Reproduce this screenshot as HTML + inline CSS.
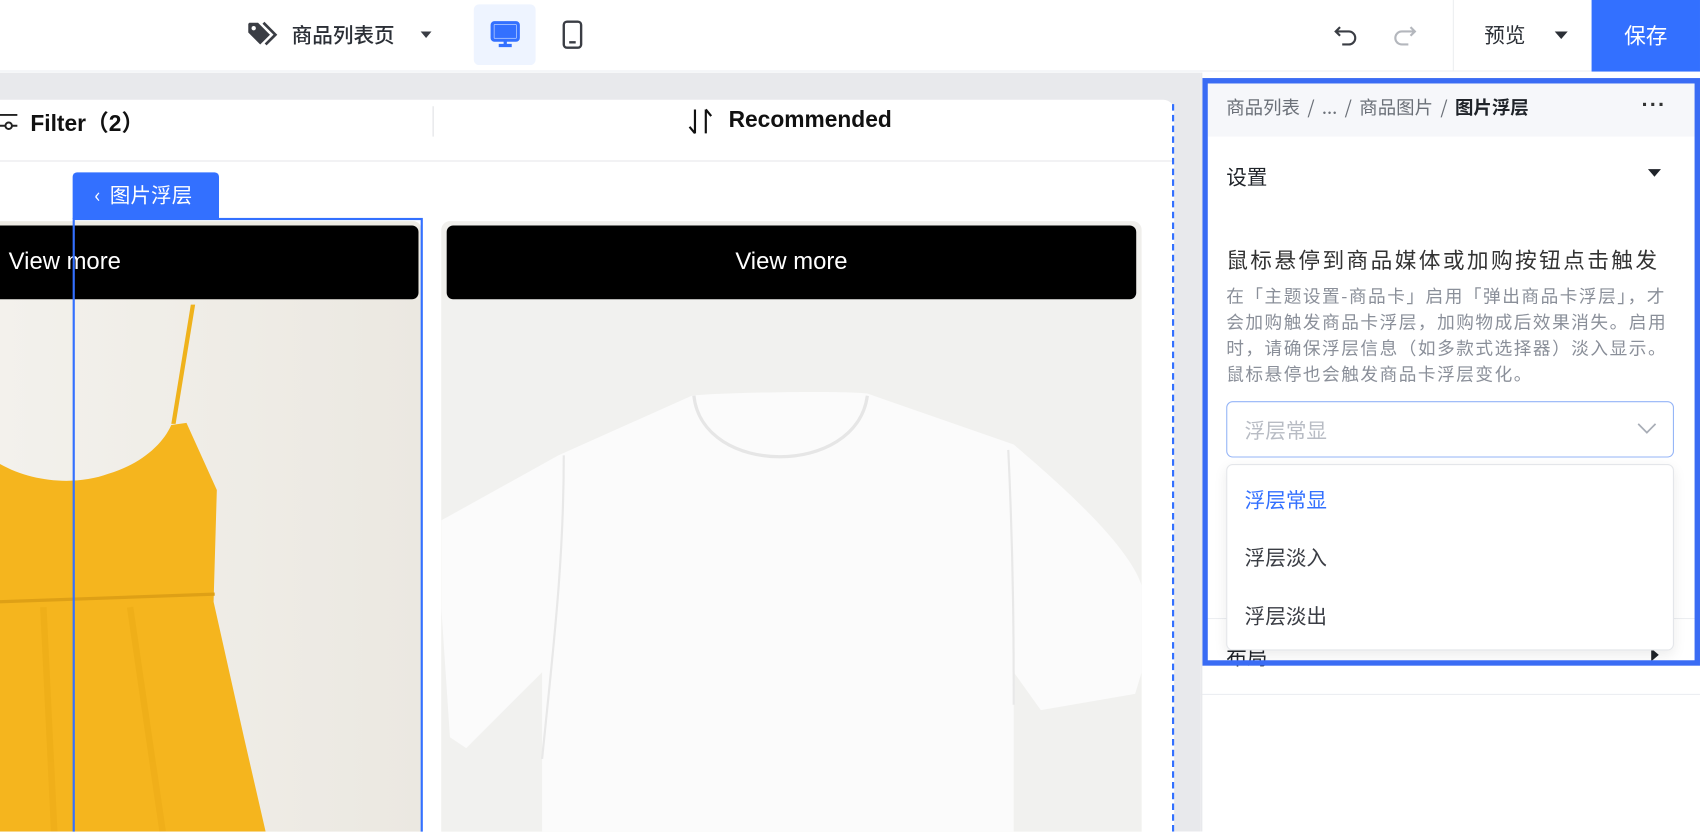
<!DOCTYPE html>
<html><head><meta charset="utf-8"><style>
*{margin:0;padding:0;box-sizing:border-box}
html,body{width:1700px;height:832px;overflow:hidden;background:#fff}
#w{position:absolute;left:0;top:0;width:1568px;height:767px;transform:scale(1.08418);transform-origin:0 0;font-family:"Liberation Sans","Noto Sans CJK SC",sans-serif;overflow:hidden}
.a{position:absolute}
.cn{font-family:"Noto Sans CJK SC","Liberation Sans",sans-serif}
</style></head><body><div id="w">
<!-- top bar -->
<div class="a" style="left:0;top:0;width:1568px;height:66px;background:#fff;border-bottom:1px solid #eceef1"></div>
<svg class="a" style="left:228px;top:19px" width="30" height="26" viewBox="0 0 30 26"><path d="M1 3v8l11 11 9-9L10 2H2z" fill="#3a3d44"/><circle cx="6" cy="7" r="2" fill="#fff"/><path d="M15 2l11 11-9 9" fill="none" stroke="#3a3d44" stroke-width="2.5"/></svg>
<div class="a cn" style="left:269px;top:18px;font-size:19px;font-weight:500;color:#2b2f36">商品列表页</div>
<div class="a" style="left:388px;top:29px;border:5px solid transparent;border-top:6px solid #3a3d44"></div>
<div class="a" style="left:437px;top:4px;width:57px;height:56px;background:#eef4ff;border-radius:5px"></div>
<svg class="a" style="left:452px;top:19px" width="28" height="26" viewBox="0 0 28 26"><rect x="2" y="2" width="24" height="16" rx="2" fill="none" stroke="#3370ff" stroke-width="3"/><rect x="4" y="4" width="20" height="12" fill="#3370ff"/><path d="M14 18v4M8 23h12" stroke="#3370ff" stroke-width="3"/></svg>
<svg class="a" style="left:517px;top:18px" width="22" height="28" viewBox="0 0 22 28"><rect x="3" y="2" width="16" height="24" rx="3" fill="none" stroke="#3a3d44" stroke-width="2.2"/><path d="M8 21h6" stroke="#3a3d44" stroke-width="2.2"/></svg>
<svg class="a" style="left:1230px;top:21px" width="24" height="22" viewBox="0 0 24 22"><path d="M6 4L2 8l4 4M2 8h12a6 6 0 010 12H8" fill="none" stroke="#3a3d44" stroke-width="2"/></svg>
<svg class="a" style="left:1283px;top:21px" width="24" height="22" viewBox="0 0 24 22"><path d="M18 4l4 4-4 4M22 8H10a6 6 0 000 12h6" fill="none" stroke="#b4b7bd" stroke-width="2"/></svg>
<div class="a" style="left:1340px;top:0;width:1px;height:66px;background:#eceef1"></div>
<div class="a cn" style="left:1369px;top:18px;font-size:19px;color:#2b2f36">预览</div>
<div class="a" style="left:1434px;top:29px;border:6px solid transparent;border-top:7px solid #2b2f36"></div>
<div class="a cn" style="left:1468px;top:0;width:100px;height:66px;background:#3370ff;color:#fff;font-size:20px;text-align:center;line-height:64px">保存</div>
<!-- canvas -->
<div class="a" style="left:0;top:67px;width:1107px;height:700px;background:#e8e9ec"></div>
<div class="a" style="left:0;top:92px;width:1083px;height:680px;background:#fff;border-top-right-radius:10px"></div>
<div class="a" style="left:1081px;top:96px;height:671px;border-left:2px dashed #3370ff"></div>
<div class="a" style="left:0;top:148px;width:1081px;height:1px;background:#e6e7ea"></div>
<div class="a" style="left:399px;top:98px;width:1px;height:28px;background:#e0e1e4"></div>
<svg class="a" style="left:0;top:101px" width="18" height="20" viewBox="0 0 18 20"><path d="M0 5h16M0 15h16" stroke="#222" stroke-width="1.8"/><circle cx="8" cy="15" r="3" fill="#fff" stroke="#222" stroke-width="1.8"/></svg>
<div class="a" style="left:28px;top:98px;font-size:21px;font-weight:bold;color:#111">Filter（2）</div>
<svg class="a" style="left:633px;top:99px" width="26" height="26" viewBox="0 0 26 26"><path d="M8 2v22M3 18l5 6M18 24V2M23 8l-5-6" fill="none" stroke="#111" stroke-width="2"/></svg>
<div class="a" style="left:672px;top:99px;font-size:21px;font-weight:bold;color:#111">Recommended</div>
<!-- card 1 -->
<div class="a" style="left:0;top:204px;width:389px;height:570px;background:#eeebe4;border-radius:0 8px 0 0"></div>
<svg class="a" style="left:0;top:276px" width="389" height="491" viewBox="0 276 389 491">
<defs><linearGradient id="bg1" x1="0" x2="1"><stop offset="0" stop-color="#f3f1ec"/><stop offset="1" stop-color="#ebe8e1"/></linearGradient></defs>
<rect x="0" y="276" width="389" height="491" fill="url(#bg1)"/>
<path d="M180 281l-4 0-18 110 4 0z" fill="#efb21c"/>
<path d="M0 428 C30 445 70 448 100 437 C130 428 150 410 158 392 L172 390 L200 452 L197 555 L225 680 L245 767 L0 767Z" fill="#f5b51e"/>
<path d="M0 555 L198 548" stroke="#dea016" stroke-width="3"/>
<path d="M120 560 L150 767 M40 560 L50 767" stroke="#e8a814" stroke-width="6" opacity=".4"/>
</svg>
<div class="a" style="left:0;top:208px;width:386px;height:68px;background:#000;border-radius:0 6px 6px 0"></div>
<div class="a" style="left:8px;top:228px;font-size:22px;color:#fff">View more</div>
<!-- card 2 -->
<div class="a" style="left:407px;top:204px;width:646px;height:570px;background:#f0efec;border-radius:8px 8px 0 0"></div>
<svg class="a" style="left:407px;top:276px" width="646" height="491" viewBox="407 276 646 491">
<rect x="407" y="276" width="646" height="491" fill="#f1f1ef"/>
<path d="M638 365 C660 362 780 360 800 363 L935 410 C970 440 1040 500 1053 540 L1053 620 L1047 640 L960 655 L935 620 L935 767 L500 767 L500 620 L430 690 L415 680 L407 560 L407 480 L515 420Z" fill="#fbfbfb"/>
<path d="M640 365 C648 440 790 440 800 365" fill="none" stroke="#e6e6e6" stroke-width="3"/>
<path d="M520 420 C520 520 510 600 500 700 M930 415 C935 520 935 600 935 650" fill="none" stroke="#e8e8e8" stroke-width="2"/>
</svg>
<div class="a" style="left:412px;top:208px;width:636px;height:68px;background:#000;border-radius:6px"></div>
<div class="a" style="left:412px;top:228px;width:636px;text-align:center;font-size:22px;color:#fff">View more</div>
<!-- selection -->
<div class="a" style="left:67px;top:201px;width:323px;height:580px;border:2px solid #3370ff"></div>
<div class="a cn" style="left:67px;top:159px;width:135px;height:43px;background:#3370ff;border-radius:4px 4px 0 0;color:#fff;font-size:19px;line-height:42px;padding-left:20px">‹&nbsp;&nbsp;图片浮层</div>
<!-- right panel -->
<div class="a" style="left:1107px;top:67px;width:461px;height:700px;background:#fff"></div>
<div class="a" style="left:1114px;top:77px;width:450px;height:49px;background:#f6f7fa"></div>
<div class="a cn" style="left:1131px;top:85px;font-size:17px;color:#6b7078;word-spacing:3px">商品列表 / ... / 商品图片 / <b style="color:#1f2329;font-weight:600">图片浮层</b></div>
<div class="a" style="left:1514px;top:86px;font-size:20px;color:#333;letter-spacing:1px;font-weight:bold">···</div>
<div class="a cn" style="left:1131px;top:149px;font-size:19px;color:#1f2329">设置</div>
<div class="a" style="left:1520px;top:156px;border:6px solid transparent;border-top:7px solid #1f2329"></div>
<div class="a cn" style="left:1131px;top:224px;width:410px;overflow:hidden;white-space:nowrap;font-size:20px;letter-spacing:2.2px;color:#333">鼠标悬停到商品媒体或加购按钮点击触发</div>
<div class="a cn" style="left:1131px;top:260px;white-space:nowrap;font-size:16.3px;letter-spacing:1.4px;line-height:24px;color:#8a8f99">在「主题设置-商品卡」启用「弹出商品卡浮层」，才<br>会加购触发商品卡浮层，加购物成后效果消失。启用<br>时，请确保浮层信息（如多款式选择器）淡入显示。<br>鼠标悬停也会触发商品卡浮层变化。</div>
<div class="a" style="left:1131px;top:370px;width:413px;height:52px;border:1.5px solid #94b4f7;border-radius:6px"></div>
<div class="a cn" style="left:1148px;top:383px;font-size:19px;color:#b8bcc4">浮层常显</div>
<svg class="a" style="left:1509px;top:388px" width="20" height="14" viewBox="0 0 20 14"><path d="M2 3l8 8 8-8" fill="none" stroke="#a8adb6" stroke-width="1.6"/></svg>
<div class="a" style="left:1114px;top:570px;width:450px;height:1px;background:#eceef1"></div>
<div class="a cn" style="left:1131px;top:592px;font-size:19px;color:#1f2329">布局</div>
<div class="a" style="left:1523px;top:598px;border:6px solid transparent;border-left:7px solid #1f2329"></div>
<div class="a" style="left:1107px;top:640px;width:461px;height:1px;background:#eceef1"></div>
<div class="a" style="left:1131px;top:428px;width:413px;height:172px;background:#fff;border:1px solid #e4e6ea;border-radius:6px;box-shadow:0 4px 12px rgba(0,0,0,.08)"></div>
<div class="a cn" style="left:1148px;top:447px;font-size:19px;color:#3370ff">浮层常显</div>
<div class="a cn" style="left:1148px;top:500px;font-size:19px;color:#3a3d44">浮层淡入</div>
<div class="a cn" style="left:1148px;top:554px;font-size:19px;color:#3a3d44">浮层淡出</div>
<div class="a" style="left:1109px;top:72px;width:459px;height:542px;border:5px solid #3a6cf4"></div>
<div class="a" style="left:1107px;top:67px;width:2px;height:700px;background:#e8e9ec"></div>
</div></body></html>
